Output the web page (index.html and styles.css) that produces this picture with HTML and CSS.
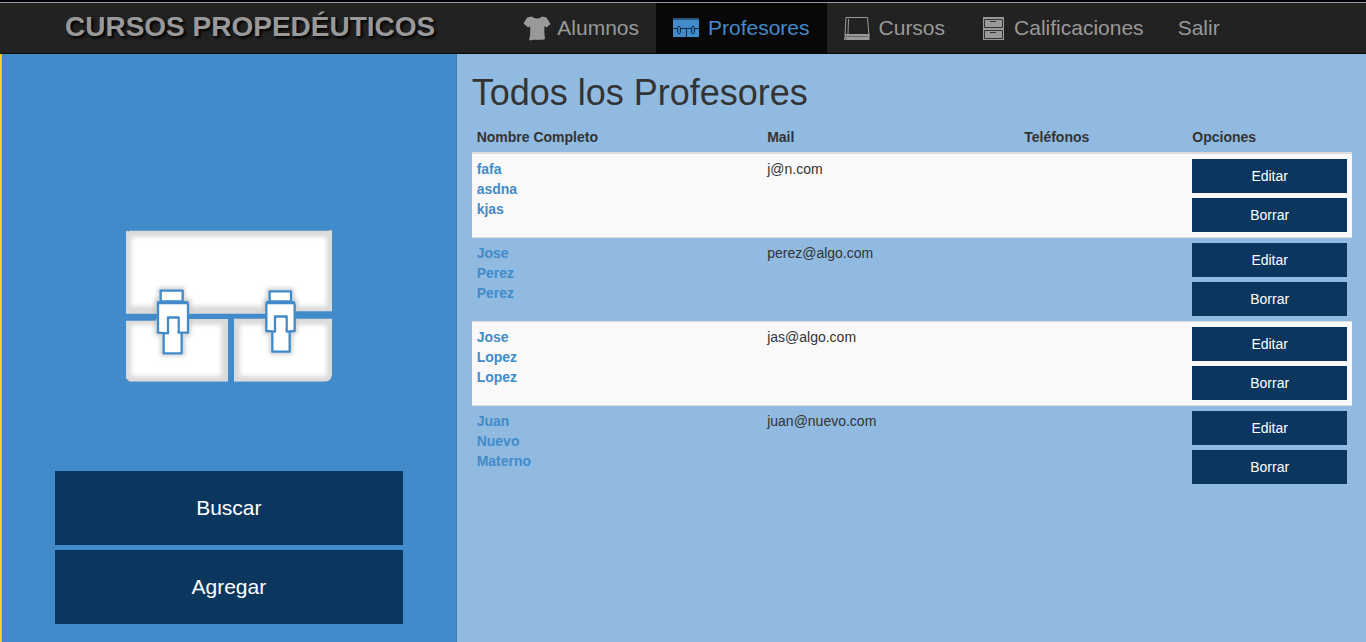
FILE: index.html
```html
<!DOCTYPE html>
<html lang="es">
<head>
<meta charset="utf-8">
<meta name="viewport" content="width=device-width, initial-scale=1">
<title>Cursos Propedéuticos</title>
<link rel="stylesheet" href="styles.css">
</head>
<body>
<header class="navbar">
  <a class="brand" href="#">CURSOS PROPEDÉUTICOS</a>
  <nav>
    <ul class="menu">
      <li><a href="#">
        <svg class="icon" viewBox="0 0 28 28" aria-hidden="true"><path fill="currentColor" d="M10 2.500c2 2.500 8 2.500 10 0l4.500 1L28.500 10l-4 3.500-2-1.500c-.5 5 0 8 .500 13-2 1.500-4.500 0-8 1-3-1-6 1-8 0 1.500-5 1.500-9 1-13.500l-2 1L1.500 9.500 5 3.500z"/></svg>
        Alumnos</a></li>
      <li><a class="active" href="#" aria-current="page">
        <svg class="icon" viewBox="0 0 28 28" aria-hidden="true"><path fill="currentColor" d="M0 4h26v19H0z"/><path fill="#080808" opacity=".4" d="M0 4h26v2H0z"/><path fill="none" stroke="#0c2b46" d="M0 14.500h26M13.500 14.500V23"/><g fill="#357ebd" stroke="#0c2b46"><path d="M4.500 13.500l1.500-1.500 1.500 1.500v5L6 20l-1.500-1.500zM18.500 13.500l1.500-1.500 1.500 1.500v5L20 20l-1.500-1.500z"/></g></svg>
        Profesores</a></li>
      <li><a href="#">
        <svg class="icon" viewBox="0 0 28 28" aria-hidden="true"><path fill="none" stroke="currentColor" d="M1 21L2 3.500h21.500L25 21"/><path stroke="currentColor" d="M4.500 5L4 20"/><path fill="currentColor" d="M1 20h24.500v6H0z"/><path fill="none" stroke="#666" d="M3.500 22.500h20M1.500 25.500L3 21"/></svg>
        Cursos</a></li>
      <li><a href="#">
        <svg class="icon" viewBox="0 0 28 28" aria-hidden="true"><path fill="currentColor" d="M4 3h21v23H4z"/><g fill="none" stroke="#333"><path d="M5.500 5.500h18v8h-18zM5.500 16.500h18v8h-18z"/><path d="M11 7.500h6M11 18.500h6"/></g></svg>
        Calificaciones</a></li>
      <li><a href="#">Salir</a></li>
    </ul>
  </nav>
</header>
<div class="layout">
  <aside class="sidebar">
    <svg class="briefcase" viewBox="42 28 624 462" role="img" aria-label="Profesores">
      <defs>
        <filter id="soft" x="-20%" y="-20%" width="140%" height="140%"><feGaussianBlur stdDeviation="7"/></filter>
        <clipPath id="panels"><path d="M45 36q3-6 9 0v-3h598q8-4 11 0v242H550v7H45zM45 303h90v-5h216v188H56l-11-10zM369 297h294v168q-3 20-22 21H369z"/></clipPath>
      </defs>
      <g clip-path="url(#panels)">
        <path fill="#dadada" d="M42 28h624v462H42z"/>
        <path fill="#fff" filter="url(#soft)" d="M61 51h586v208H61zM61 315h270v154H61zM387 315h260v154H387z"/>
        <g fill="none" stroke="#c8c8c8" stroke-width="12" filter="url(#soft)"><path d="M147 210h68v33h18v99h-18v60h-60v-60h-18v-99h10zM474 212h68v31h10v95h-14v60h-56v-60h-18v-95h10z"/></g>
      </g>
      <g fill="#fff" stroke="#428bca" stroke-width="7" stroke-linejoin="round">
        <path d="M149 213h66v32h-66zM476 215h64v30h-64z"/>
        <path d="M158 335h54v66h-54zM484 330h52v66h-52z"/>
        <path d="M141 248q45-3 88 0l2 8v83h-28v-46h-32v48l-30-2v-83zM467 248q42-3 82 0l2 8v78l-24 2v-46h-35v46l-26-2v-78z"/>
        <path stroke="none" d="M175 297h24v50h-24zM496 294h27v46h-27z"/>
        <path fill="none" stroke-width="10" d="M142 249h88M467 249h82"/>
      </g>
    </svg>
    <div class="actions">
      <button class="btn btn-large" type="button">Buscar</button>
      <button class="btn btn-large" type="button">Agregar</button>
    </div>
  </aside>
  <main class="content">
    <h1>Todos los Profesores</h1>
    <table class="teachers">
      <thead>
        <tr><th class="col-name" scope="col">Nombre Completo</th><th class="col-mail" scope="col">Mail</th><th class="col-phone" scope="col">Teléfonos</th><th class="col-options" scope="col">Opciones</th></tr>
      </thead>
      <tbody>
        <tr><td><a href="#">fafa<br>asdna<br>kjas</a></td><td>j@n.com</td><td></td><td><div class="options"><button class="btn" type="button">Editar</button><button class="btn" type="button">Borrar</button></div></td></tr>
        <tr><td><a href="#">Jose<br>Perez<br>Perez</a></td><td>perez@algo.com</td><td></td><td><div class="options"><button class="btn" type="button">Editar</button><button class="btn" type="button">Borrar</button></div></td></tr>
        <tr><td><a href="#">Jose<br>Lopez<br>Lopez</a></td><td>jas@algo.com</td><td></td><td><div class="options"><button class="btn" type="button">Editar</button><button class="btn" type="button">Borrar</button></div></td></tr>
        <tr><td><a href="#">Juan<br>Nuevo<br>Materno</a></td><td>juan@nuevo.com</td><td></td><td><div class="options"><button class="btn" type="button">Editar</button><button class="btn" type="button">Borrar</button></div></td></tr>
      </tbody>
    </table>
  </main>
</div>
</body>
</html>
```
FILE: styles.css
```css
* { box-sizing: border-box; }
body {
  display: flex;
  flex-direction: column;
  min-height: 100vh;
  margin: 0;
  border-top: 2px solid #02020a;
  background: #90bae0;
  color: #333;
  font: 14px/20px "Liberation Sans", Arial, sans-serif;
}
a { text-decoration: none; }
.navbar {
  display: flex;
  align-items: stretch;
  padding-left: 65px;
  border-top: 1px solid #999;
  border-bottom: 1px solid #080808;
  background: #222;
  white-space: nowrap;
}
.brand {
  padding: 9px 0 11px;
  color: #999;
  font-size: 28px;
  font-weight: bold;
  line-height: 30px;
  text-shadow: 2px 2px 3px #000;
}
.menu {
  display: flex;
  margin: 0 0 0 70px;
  padding: 0;
  list-style: none;
}
.menu a {
  display: flex;
  align-items: center;
  gap: 7px;
  height: 50px;
  padding: 0 17px;
  color: #999;
  font-size: 21px;
}
.menu .active { background: #080808; color: #428bca; }
.icon { flex: none; width: 28px; height: 28px; overflow: visible; }
.layout {
  display: flex;
  flex: 1;
  border-left: 2px solid #ffc928;
}
.sidebar {
  flex: none;
  display: flex;
  flex-direction: column;
  align-items: center;
  gap: 88px;
  width: 33.3333%;
  padding: 175px 53px 18px 52px;
  border: solid #357ebd;
  border-width: 0 1px;
  background: #428bca;
}
.briefcase { width: 208px; height: 154px; }
.actions {
  display: flex;
  flex-direction: column;
  gap: 5px;
  width: 100%;
}
.btn {
  width: 100%;
  height: 34px;
  padding: 0 12px;
  border: 0;
  background: #0b375e;
  color: #fff;
  font: inherit;
}
.btn-large { height: 74px; font-size: 21px; }
.content { flex: 1; padding: 19px 14px 19px 15px; }
h1 {
  margin: 0 0 9px;
  font-size: 36px;
  font-weight: normal;
  line-height: 40px;
}
.teachers {
  width: 100%;
  table-layout: fixed;
  border-spacing: 0;
}
.teachers th {
  padding: 5px;
  border-bottom: 2px solid #ddd;
  text-align: left;
}
.teachers td {
  padding: 5px;
  border-top: 1px solid #ddd;
  vertical-align: top;
}
.teachers tbody tr:first-child td { border-top: 0; }
.teachers tbody tr:nth-child(odd) { background: #f9f9f9; }
.teachers td a { color: #428bca; font-weight: bold; }
.col-name { width: 33%; }
.col-mail { width: 29.2%; }
.col-phone { width: 19.1%; }
.col-options { width: 18.7%; }
.options { display: flex; flex-direction: column; gap: 5px; }
```
